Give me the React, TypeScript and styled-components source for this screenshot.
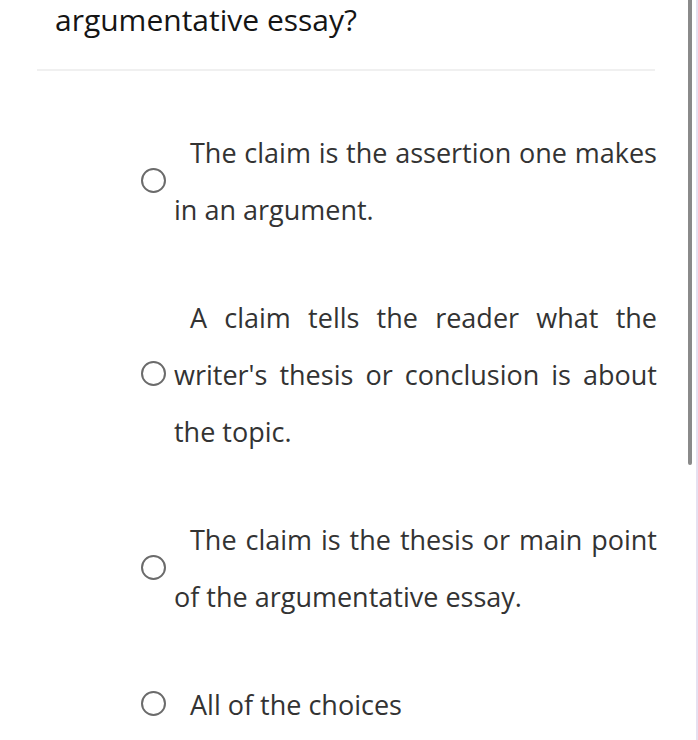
import * as React from "react";
import styled, { createGlobalStyle } from "styled-components";

const GlobalStyle = createGlobalStyle`
  html, body {
    margin: 0;
    padding: 0;
    background: #ffffff;
    overflow: hidden;
  }
  body {
    font-family: "Open Sans", "Noto Sans", sans-serif;
  }
`;

const Page = styled.div`
  position: relative;
  width: 698px;
  height: 740px;
  overflow: hidden;
  background: #fff;
  border-right: 2px solid #e6e0f0;
  box-sizing: border-box;
`;

const Content = styled.div`
  padding: 0 39px 0 37px;
`;

const Title = styled.h2`
  margin: 0;
  padding-left: 18px;
  font-size: 30px;
  font-weight: 400;
  line-height: 40px;
  color: #151515;
  height: 40px;
`;

const Divider = styled.hr`
  border: none;
  height: 2px;
  background: #f0f0f0;
  margin: 29px 2px 0 0;
`;

const Options = styled.div`
  display: flex;
  flex-direction: column;
  gap: 51px;
  padding: 53px 0 0 104px;
`;

const Option = styled.label`
  display: flex;
  align-items: center;
`;

const RadioCell = styled.div`
  width: 33px;
  flex: none;
  display: flex;
  align-items: center;
`;

const Radio = styled.span`
  display: block;
  width: 21px;
  height: 21px;
  border: 2px solid #6b6b6b;
  border-radius: 50%;
  margin-top: -2px;
`;

const Text = styled.div`
  flex: 1;
  font-size: 27px;
  line-height: 57px;
  color: #333;
  text-align: justify;
  text-indent: 16px;
`;

const ScrollThumb = styled.div`
  position: absolute;
  right: 4px;
  top: 0;
  width: 4px;
  height: 465px;
  background: #8a8a8a;
  border-radius: 0 0 2px 2px;
`;

const choices = [
  "The claim is the assertion one makes in an argument.",
  "A claim tells the reader what the writer's thesis or conclusion is about the topic.",
  "The claim is the thesis or main point of the argumentative essay.",
  "All of the choices",
];

export default function App() {
  return (
    <Page>
      <GlobalStyle />
      <Content>
        <Title>argumentative essay?</Title>
        <Divider />
        <Options>
          {choices.map((c) => (
            <Option key={c}>
              <RadioCell>
                <Radio />
              </RadioCell>
              <Text>{c}</Text>
            </Option>
          ))}
        </Options>
      </Content>
      <ScrollThumb />
    </Page>
  );
}
